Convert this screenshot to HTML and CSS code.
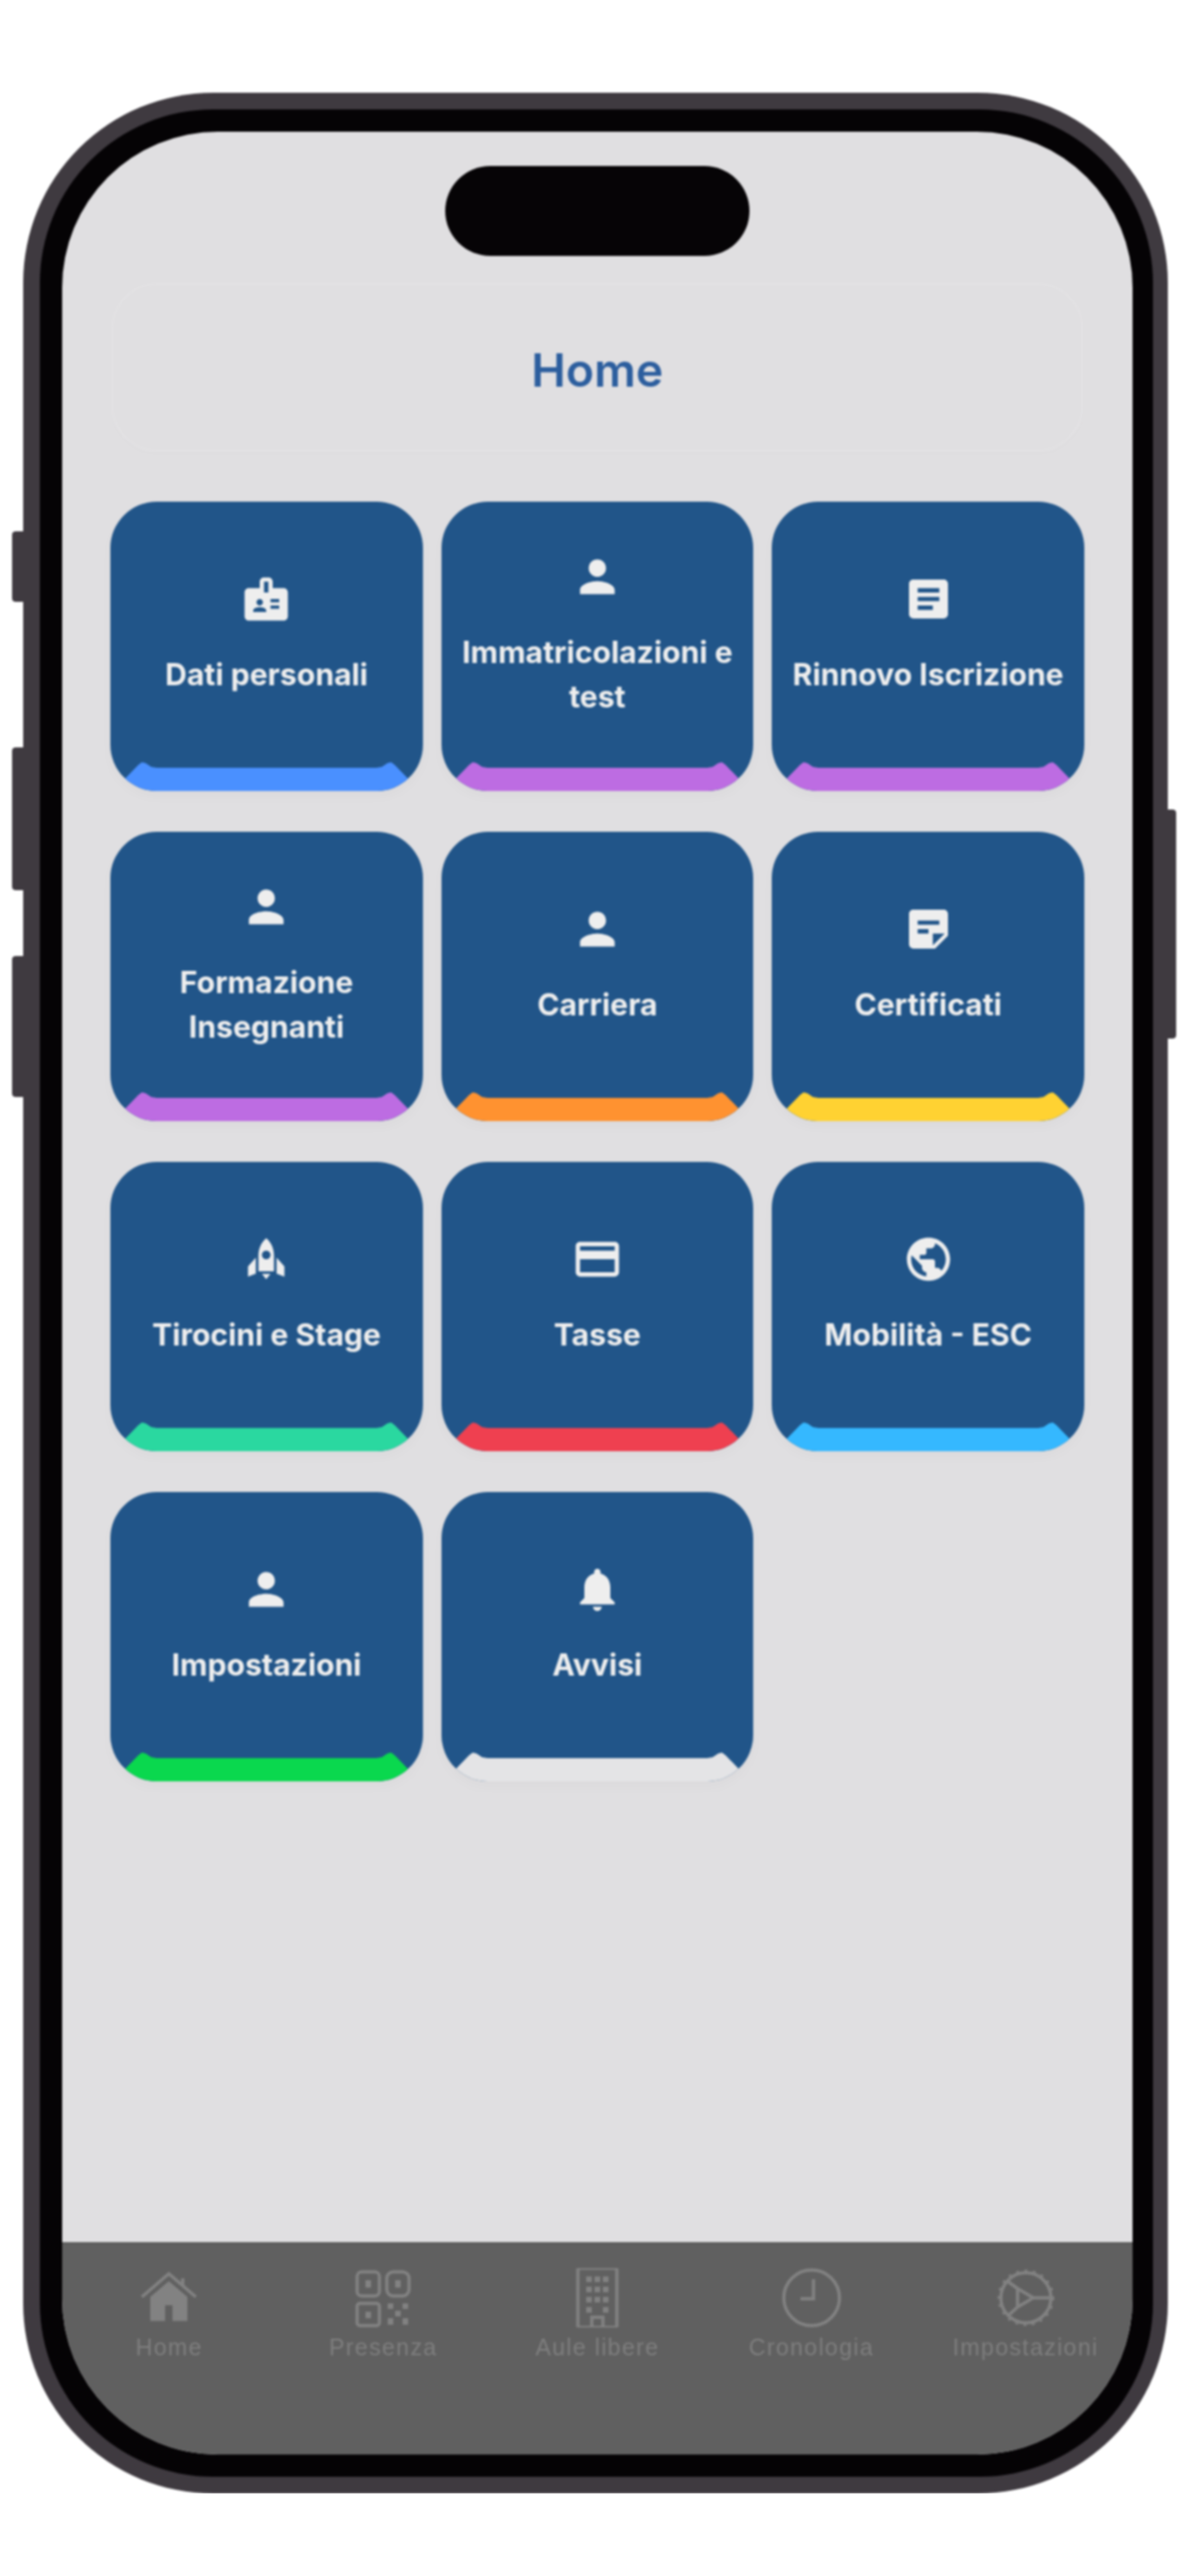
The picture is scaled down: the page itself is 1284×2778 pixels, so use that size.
FILE: index.html
```html
<!DOCTYPE html>
<html lang="en">
<head>
  <meta charset="UTF-8" />
  <meta name="viewport" content="width=device-width, initial-scale=1" />
  <title>Home</title>
  <link rel="stylesheet" href="styles.css">
</head>
<body>

<div class="phone">
  <span class="side-btn mute"></span>
  <span class="side-btn vol-up"></span>
  <span class="side-btn vol-down"></span>
  <span class="side-btn power"></span>

  <div class="bezel">
    <div class="screen">
      <div class="island"></div>

      <header class="title-card"><h1>Home</h1></header>

      <main class="tiles">
        <a class="tile blue">
          <svg class="tile-icon" viewBox="0 0 24 24"><path d="M20 7h-5V4c0-1.1-.9-2-2-2h-2c-1.1 0-2 .9-2 2v3H4c-1.1 0-2 .9-2 2v11c0 1.1.9 2 2 2h16c1.1 0 2-.9 2-2V9c0-1.1-.9-2-2-2zm-11 5c.83 0 1.5.67 1.5 1.5S9.83 15 9 15s-1.5-.67-1.5-1.5S8.17 12 9 12zm3 6H6v-.75c0-1 2-1.5 3-1.5s3 .5 3 1.5V18zm1-9h-2V4h2v5zm5 7.5h-4V15h4v1.5zm0-3h-4V12h4v1.5z"/></svg>
          <span class="tile-label">Dati personali</span>
          <i class="stripe"></i>
        </a>
        <a class="tile purple">
          <svg class="tile-icon" viewBox="0 0 24 24"><path d="M12 12c2.21 0 4-1.79 4-4s-1.79-4-4-4-4 1.79-4 4 1.79 4 4 4zm0 2c-2.67 0-8 1.34-8 4v2h16v-2c0-2.66-5.33-4-8-4z"/></svg>
          <span class="tile-label">Immatricolazioni e test</span>
          <i class="stripe"></i>
        </a>
        <a class="tile purple">
          <svg class="tile-icon" viewBox="0 0 24 24"><path d="M19 3H5c-1.1 0-2 .9-2 2v14c0 1.1.9 2 2 2h14c1.1 0 2-.9 2-2V5c0-1.1-.9-2-2-2zm-5 14H7v-2h7v2zm3-4H7v-2h10v2zm0-4H7V7h10v2z"/></svg>
          <span class="tile-label">Rinnovo Iscrizione</span>
          <i class="stripe"></i>
        </a>

        <a class="tile purple">
          <svg class="tile-icon" viewBox="0 0 24 24"><path d="M12 12c2.21 0 4-1.79 4-4s-1.79-4-4-4-4 1.79-4 4 1.79 4 4 4zm0 2c-2.67 0-8 1.34-8 4v2h16v-2c0-2.66-5.33-4-8-4z"/></svg>
          <span class="tile-label">Formazione Insegnanti</span>
          <i class="stripe"></i>
        </a>
        <a class="tile orange">
          <svg class="tile-icon" viewBox="0 0 24 24"><path d="M12 12c2.21 0 4-1.79 4-4s-1.79-4-4-4-4 1.79-4 4 1.79 4 4 4zm0 2c-2.67 0-8 1.34-8 4v2h16v-2c0-2.66-5.33-4-8-4z"/></svg>
          <span class="tile-label">Carriera</span>
          <i class="stripe"></i>
        </a>
        <a class="tile yellow">
          <svg class="tile-icon" viewBox="0 0 24 24"><path d="M19 3H4.99C3.89 3 3 3.9 3 5l.01 14c0 1.1.89 2 1.99 2h10l6-6V5c0-1.1-.9-2-2-2zM7 8h10v2H7V8zm5 6H7v-2h5v2zm2 5.500V14h5.500L14 19.500z"/></svg>
          <span class="tile-label">Certificati</span>
          <i class="stripe"></i>
        </a>

        <a class="tile teal">
          <svg class="tile-icon" viewBox="0 0 24 24"><path fill-rule="evenodd" d="M12 2.200c2.300 1.900 3.600 4.900 3.600 8.200v7.200H8.400v-7.200C8.400 7.100 9.700 4.100 12 2.200zM12 8a2 2 0 1 0 0 4 2 2 0 0 0 0-4z"/><path d="M7.200 11.300v7.300l-3.600 1.400v-4.700zM16.800 11.300v7.300l3.600 1.400v-4.700zM10 18.800h4L12 21.200z"/></svg>
          <span class="tile-label">Tirocini e Stage</span>
          <i class="stripe"></i>
        </a>
        <a class="tile red">
          <svg class="tile-icon" viewBox="0 0 24 24"><path d="M20 4H4c-1.11 0-1.99.89-1.99 2L2 18c0 1.11.89 2 2 2h16c1.11 0 2-.89 2-2V6c0-1.11-.89-2-2-2zm0 14H4v-6h16v6zm0-10H4V6h16v2z"/></svg>
          <span class="tile-label">Tasse</span>
          <i class="stripe"></i>
        </a>
        <a class="tile sky">
          <svg class="tile-icon" viewBox="0 0 24 24"><path d="M12 2C6.48 2 2 6.48 2 12s4.48 10 10 10 10-4.48 10-10S17.52 2 12 2zm-1 17.930c-3.950-.49-7-3.850-7-7.930 0-.62.08-1.210.21-1.790L9 15v1c0 1.100.9 2 2 2v1.930zm6.900-2.540c-.26-.81-1-1.390-1.900-1.390h-1v-3c0-.55-.45-1-1-1H8v-2h2c.55 0 1-.45 1-1V7h2c1.100 0 2-.9 2-2v-.41c2.930 1.190 5 4.060 5 7.410 0 2.080-.8 3.970-2.100 5.390z"/></svg>
          <span class="tile-label">Mobilità - ESC</span>
          <i class="stripe"></i>
        </a>

        <a class="tile green">
          <svg class="tile-icon" viewBox="0 0 24 24"><path d="M12 12c2.21 0 4-1.79 4-4s-1.79-4-4-4-4 1.79-4 4 1.79 4 4 4zm0 2c-2.67 0-8 1.34-8 4v2h16v-2c0-2.66-5.33-4-8-4z"/></svg>
          <span class="tile-label">Impostazioni</span>
          <i class="stripe"></i>
        </a>
        <a class="tile pale">
          <svg class="tile-icon" viewBox="0 0 24 24"><path d="M12 22c1.100 0 2-.9 2-2h-4c0 1.100.89 2 2 2zm6-6v-5c0-3.070-1.640-5.640-4.500-6.320V4c0-.83-.67-1.500-1.500-1.500s-1.500.67-1.500 1.500v.68C7.630 5.360 6 7.920 6 11v5l-2 2v1h16v-1l-2-2z"/></svg>
          <span class="tile-label">Avvisi</span>
          <i class="stripe"></i>
        </a>
      </main>

      <nav class="tabbar">
        <a class="tab">
          <svg class="tab-icon" viewBox="0 0 64 64"><path class="line" d="M3 31 32 6l29 25M47 11v8"/><path class="solid" fill-rule="evenodd" d="M32 14 52 31v26H12V31zM28 40v17h8V40z"/></svg>
          <span>Home</span>
        </a>
        <a class="tab">
          <svg class="tab-icon" viewBox="0 0 64 64">
            <rect class="line" x="4" y="4" width="24" height="26" rx="5"/>
            <rect class="line" x="36" y="4" width="24" height="26" rx="7"/>
            <rect class="line" x="4" y="38" width="24" height="24" rx="3"/>
            <path class="solid" d="M13 13h6v8h-6zM45 13h6v8h-6zM13 47h6v7h-6zM37 38h6v6h-6zM53 38h6v6h-6zM45 46h6v6h-6zM37 54h6v7h-6zM53 54h6v7h-6z"/>
          </svg>
          <span>Presenza</span>
        </a>
        <a class="tab">
          <svg class="tab-icon" viewBox="0 0 64 64">
            <rect class="line" x="11" y="0" width="42" height="64" rx="2"/>
            <path class="solid" d="M20 9h6v6h-6zM29 9h6v6h-6zM38 9h6v6h-6zM20 20h6v6h-6zM29 20h6v6h-6zM38 20h6v6h-6zM20 31h6v6h-6zM29 31h6v6h-6zM38 31h6v6h-6zM20 42h6v6h-6zM38 42h6v6h-6z"/>
            <path class="line" d="M26 63V53h12v10"/>
          </svg>
          <span>Aule libere</span>
        </a>
        <a class="tab">
          <svg class="tab-icon" viewBox="0 0 64 64"><circle class="line" cx="32" cy="32" r="30"/><path class="line" d="M34 12v21H20"/></svg>
          <span>Cronologia</span>
        </a>
        <a class="tab">
          <svg class="tab-icon" viewBox="0 0 64 64"><circle class="line" cx="32" cy="32" r="27"/><circle class="dash" cx="32" cy="32" r="29"/><path class="line" d="M23 22 40 32 23 42zM23 22 12 14M23 42 12 52M40 32h18"/></svg>
          <span>Impostazioni</span>
        </a>
      </nav>
    </div>
  </div>
</div>

</body>
</html>
```

FILE: styles.css
```css
body {
  margin: 0;
  background: #fff;
  font-family: Inter, 'Liberation Sans', sans-serif;
}

.phone {
  position: relative;
  box-sizing: border-box;
  width: 1234px;
  height: 2589px;
  margin: 100px 0 0 25px;
  padding: 18px 16px 18px 18px;
  background: #3f3a40;
  border-radius: 205px;
  filter: blur(1px);
}

.side-btn {
  position: absolute;
  background: #3f3a40;
}

.mute {
  left: -12px;
  top: 473px;
  width: 12px;
  height: 76px;
  border-radius: 4px 0 0 4px;
}

.vol-up {
  left: -12px;
  top: 706px;
  width: 12px;
  height: 154px;
  border-radius: 4px 0 0 4px;
}

.vol-down {
  left: -12px;
  top: 931px;
  width: 12px;
  height: 152px;
  border-radius: 4px 0 0 4px;
}

.power {
  right: -9px;
  top: 773px;
  width: 9px;
  height: 247px;
  border-radius: 0 4px 4px 0;
}

.bezel {
  box-sizing: border-box;
  height: 100%;
  padding: 24px 22px 24px 24px;
  background: #050305;
  border-radius: 187px;
}

.screen {
  display: flex;
  flex-direction: column;
  height: 100%;
  overflow: hidden;
  background: #e0dfe1;
  border-radius: 168px;
}

.island {
  flex: none;
  width: 328px;
  height: 97px;
  margin: 37px auto 0;
  background: #060406;
  border-radius: 49px;
}

.title-card {
  flex: none;
  box-sizing: border-box;
  height: 182px;
  margin: 29px 53px 0;
  padding-top: 6px;
  display: flex;
  align-items: center;
  justify-content: center;
  border: 2px solid #e3e2e4;
  border-radius: 50px;
  box-shadow: 0 2px 8px rgba(0, 0, 0, 0.012);
}

.title-card h1 {
  margin: 0;
  color: #2c5e9e;
  font-size: 50px;
  font-weight: 600;
}

.tiles {
  flex: 1;
  display: grid;
  grid-template-columns: repeat(3, 1fr);
  grid-auto-rows: 312px;
  gap: 44px 20px;
  align-content: start;
  padding: 54px 52px 0;
}

.tile {
  position: relative;
  box-sizing: border-box;
  display: flex;
  flex-direction: column;
  align-items: center;
  justify-content: center;
  padding: 0 10px 24px;
  overflow: hidden;
  background: #215589;
  border-radius: 50px;
  box-shadow: 0 6px 14px rgba(0, 0, 0, 0.025);
  color: #eeeeee;
  text-align: center;
}

.tile-icon {
  flex: none;
  width: 56px;
  height: 56px;
  margin-bottom: 30px;
  fill: #eeeeee;
}

.tile-label {
  font-size: 32.500px;
  font-weight: 700;
  line-height: 48px;
}

/* coloured strip with the two little ears at the corners */
.stripe {
  position: absolute;
  left: 0;
  right: 0;
  bottom: 0;
  height: 31px;
  clip-path: polygon(0 100%, 0 34px, 30px 3px, 34px 0, 38px 1px, 44px 5px, 50px 6px,
    calc(100% - 50px) 6px, calc(100% - 44px) 5px, calc(100% - 38px) 1px, calc(100% - 34px) 0,
    calc(100% - 30px) 3px, 100% 34px, 100% 100%);
}

.blue .stripe { background: #4a90ff; }
.purple .stripe { background: #bd6ce2; }
.orange .stripe { background: #ff9230; }
.yellow .stripe { background: #ffd232; }
.teal .stripe { background: #2ad8a0; }
.red .stripe { background: #ef4050; }
.sky .stripe { background: #35b8ff; }
.green .stripe { background: #0ad84e; }
.pale .stripe { background: #e4e4e6; }

.tabbar {
  flex: none;
  box-sizing: border-box;
  height: 229px;
  display: grid;
  grid-template-columns: repeat(5, 1fr);
  padding-top: 26px;
  background: #606060;
  border-top: 2px solid #5a5a5a;
}

.tab {
  display: flex;
  flex-direction: column;
  align-items: center;
  color: #7e7e7e;
  font-family: 'Liberation Sans', sans-serif;
  font-size: 25px;
  letter-spacing: 1.400px;
  line-height: 30px;
  white-space: nowrap;
}

.tab-icon {
  width: 64px;
  height: 64px;
  margin-bottom: 6px;
}

.tab-icon .line {
  fill: none;
  stroke: #828282;
  stroke-width: 3.500;
}

.tab-icon .solid {
  fill: #828282;
}

.tab-icon .dash {
  fill: none;
  stroke: #828282;
  stroke-width: 3;
  stroke-dasharray: 3 6;
}
```
